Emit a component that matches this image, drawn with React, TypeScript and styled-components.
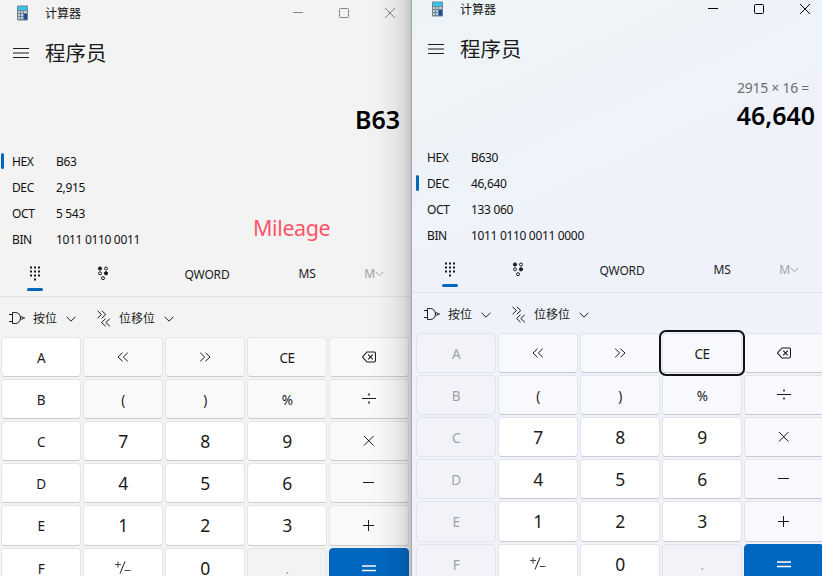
import React from "react";
import styled, { createGlobalStyle, css } from "styled-components";

const GlobalStyle = createGlobalStyle`
  * { box-sizing: border-box; }
  html, body { margin: 0; padding: 0; overflow: hidden; }
  body { font-family: "Noto Sans", "Noto Sans CJK SC", sans-serif; color: #1b1b1b; }
  svg { display: block; flex: none; }
`;

type Theme = { operator: string; disabled: string; line: string; edge: string };
const greyTheme: Theme = { operator: "#f9f9f9", disabled: "#f3f3f3", line: "#e5e5e5", edge: "#cccccc" };
const blueTheme: Theme = { operator: "#f8f9fd", disabled: "#f2f3f9", line: "#e1e4ec", edge: "#c8cad0" };

const Desktop = styled.div`
  display: flex;
  width: 822px;
  height: 576px;
  overflow: hidden;
`;

const Frame = styled.section<{ $active: boolean }>`
  position: relative;
  flex: none;
  width: 411px;
  height: 576px;
  overflow: hidden;
  background: #f3f3f3;
  ${(p) =>
    p.$active &&
    css`
      border-left: 1px solid #a3a8ae;
      background: linear-gradient(155deg, #edf4f7 0%, #eef3f8 20%, #eff2fb 36%, #eff2fa 60%, #f1f2f8 75%);
    `}
`;

const EdgeShadow = styled.div`
  position: absolute;
  inset: 0 0 0 auto;
  width: 48px;
  pointer-events: none;
  background: linear-gradient(
    90deg,
    rgba(0, 0, 0, 0) 0%,
    rgba(0, 0, 0, 0.012) 35%,
    rgba(0, 0, 0, 0.05) 65%,
    rgba(0, 0, 0, 0.11) 86%,
    rgba(0, 0, 0, 0.2) 100%
  );
`;

const Content = styled.div<{ $active: boolean }>`
  display: flex;
  flex-direction: column;
  width: 412px;
  margin: ${(p) => (p.$active ? "-4px 0 0 3px" : "0")};
`;

const TitleBar = styled.header`
  display: flex;
  align-items: center;
  height: 26px;
  padding-left: 16px;
`;

const AppName = styled.span`
  flex: 1;
  margin-left: 16px;
  font: 12px/18px "Noto Sans CJK SC", sans-serif;
  color: #111;
`;

const Controls = styled.div<{ $active: boolean }>`
  display: flex;
  gap: 34px;
  margin-right: 16px;
  color: ${(p) => (p.$active ? "#000" : "#858585")};
`;

const ModeBar = styled.div`
  display: flex;
  align-items: center;
  gap: 16px;
  height: 54px;
  padding-left: 13px;
`;

const ModeName = styled.h1`
  margin: 0;
  padding-bottom: 2px;
  font: 400 20.5px/30px "Noto Sans CJK SC", sans-serif;
`;

const Expression = styled.div`
  height: 24px;
  padding-right: 18px;
  text-align: right;
  font-size: 14px;
  line-height: 24px;
  letter-spacing: -0.27px;
  color: #6c6e73;
`;

const Result = styled.div`
  height: 32px;
  padding-right: 12px;
  text-align: right;
  font-size: 25px;
  font-weight: 600;
  line-height: 30px;
  letter-spacing: -0.05px;
  color: #000;
`;

const RadixList = styled.div`
  display: flex;
  flex-direction: column;
  padding-top: 12px;
`;

const RadixRow = styled.div`
  display: grid;
  grid-template-columns: 3px 41px 1fr;
  column-gap: 4px;
  align-items: center;
  height: 26px;
  padding-left: 1px;
  font-size: 12px;
  line-height: 16px;
  color: #111;
`;

const Marker = styled.i<{ $on: boolean }>`
  height: 16px;
  border-radius: 1.5px;
  background: ${(p) => (p.$on ? "#0067c0" : "transparent")};
`;

const RadixName = styled.span`
  padding: 2px 0 0 4px;
  letter-spacing: -0.4px;
`;

const RadixValue = styled.span`
  padding: 2px 0 0 3px;
  letter-spacing: -0.33px;
`;

const Annotation = styled.div`
  position: absolute;
  left: 253px;
  top: 213px;
  font-size: 21.5px;
  line-height: 29px;
  letter-spacing: -0.4px;
  color: #ff5568;
`;

const Tools = styled.nav<{ $active: boolean }>`
  display: grid;
  grid-template-columns: 68px 68px 140px 60px 74px;
  height: 45px;
  margin: 0 0 0 ${(p) => (p.$active ? "-3px" : "0")};
  padding-left: ${(p) => (p.$active ? "4px" : "1px")};
  border-bottom: 1px solid ${(p) => (p.$active ? "#dfe2e7" : "#e2e2e2")};
`;

const Tool = styled.div<{ $selected?: boolean; $dim?: boolean; $drop?: number }>`
  position: relative;
  display: flex;
  justify-content: center;
  align-items: center;
  padding-top: ${(p) => p.$drop ?? 0}px;
  padding-bottom: 2px;
  font-size: 12px;
  letter-spacing: -0.2px;
  color: ${(p) => (p.$dim ? "#a1a1a3" : "#1b1b1b")};
  ${(p) =>
    p.$selected &&
    css`
      &::after {
        content: "";
        position: absolute;
        left: 26px;
        bottom: 5px;
        width: 16px;
        height: 3px;
        border-radius: 1.5px;
        background: #0067c0;
      }
    `}
`;

const BitBar = styled.div`
  display: flex;
  align-items: center;
  height: 40px;
  padding: 2px 0 0 9px;
  font: 12px/18px "Noto Sans CJK SC", sans-serif;
`;

const BitMenu = styled.div<{ $width: number }>`
  display: flex;
  align-items: center;
  gap: 8px;
  width: ${(p) => p.$width}px;
  > svg:last-child { margin: 2px 0 0 1px; }
`;

const Pad = styled.div`
  display: grid;
  grid-template-columns: repeat(5, 80px);
  grid-template-rows: repeat(4, 40px) 41px 41px;
  gap: 2px;
  padding-left: 1px;
`;

type Kind = "digit" | "operator" | "disabled" | "accent";
const Key = styled.button<{ $kind: Kind; $theme: Theme; $big: boolean; $focus: boolean }>`
  display: flex;
  justify-content: center;
  align-items: center;
  padding: ${(p) => (p.$big ? "0" : "1px 0 0")};
  border: 1px solid ${(p) => p.$theme.line};
  border-bottom-color: ${(p) => (p.$kind === "disabled" ? p.$theme.line : p.$theme.edge)};
  border-radius: 4px;
  background: ${(p) => (p.$kind === "digit" ? "#fff" : p.$theme[p.$kind === "disabled" ? "disabled" : "operator"])};
  color: ${(p) => (p.$kind === "disabled" ? "#a0a1a5" : "#1b1b1b")};
  font: ${(p) => (p.$big ? "17.5px/19px" : "13.5px/18px")} "Noto Sans", sans-serif;
  letter-spacing: -0.5px;
  ${(p) =>
    p.$kind === "accent" &&
    css`
      border-color: #0067c0;
      background: #0067c0;
      color: #fff;
    `}
  ${(p) =>
    p.$focus &&
    css`
      outline: 2px solid #111216;
      outline-offset: 1px;
      z-index: 1;
    `}
  svg { margin-top: -2px; }
`;

const stroke = { fill: "none", stroke: "currentColor", strokeWidth: 1 } as const;

const CalcLogo = () => (
  <svg width="13" height="16" viewBox="0 0 13 16">
    <rect x="1" y="0.5" width="11" height="15" rx="1" fill="#718290" />
    <rect x="2" y="1.5" width="9" height="3.5" fill="#35c5ef" />
    <path d="M2 6h2v2h-2zM5 6h2v2h-2zM8 6h3v2h-3zM2 9h2v2h-2zM5 9h2v2h-2zM2 12h2v2h-2zM5 12h2v2h-2z" fill="#c3cdd4" />
    <rect x="8" y="9" width="3" height="5.5" fill="#114f9d" />
  </svg>
);
const Minimize = () => (
  <svg width="12" height="12" viewBox="0 0 12 12"><path d="M1 5.5H11" {...stroke} /></svg>
);
const Maximize = () => (
  <svg width="12" height="12" viewBox="0 0 12 12"><rect x="1.5" y="1.5" width="9" height="9" rx="1" {...stroke} /></svg>
);
const Close = () => (
  <svg width="12" height="12" viewBox="0 0 12 12"><path d="M1 1L11 11M11 1L1 11" {...stroke} /></svg>
);
const Burger = () => (
  <svg width="16" height="12" viewBox="0 0 16 12">
    <path d="M0 1.5H16M0 6H16M0 10.5H16" {...stroke} />
  </svg>
);
const Keypad = () => (
  <svg width="12" height="15" viewBox="0 0 12 15" fill="currentColor">
    {[0, 4, 8].flatMap((y) => [1, 5, 9].map((x) => <rect key={`${x}-${y}`} x={x} y={y + 0.5} width="2" height="2" />))}
    <rect x="5" y="12.5" width="2" height="2" />
  </svg>
);
const BitPad = () => (
  <svg width="12" height="15" viewBox="0 0 12 15" fill="none" stroke="currentColor">
    <circle cx="3" cy="2.5" r="1.6" fill="currentColor" />
    <circle cx="9" cy="2.5" r="1.5" />
    <circle cx="3" cy="7.3" r="1.5" />
    <circle cx="9" cy="7.3" r="1.6" fill="currentColor" />
    <circle cx="6" cy="12.2" r="1.5" />
  </svg>
);
const Chevron = ({ w = 10 }: { w?: number }) => (
  <svg width={w} height={w * 0.6} viewBox="0 0 10 6"><path d="M0.5 0.7L5 5.2L9.5 0.7" {...stroke} strokeWidth={10 / w} /></svg>
);
const Gate = () => (
  <svg width="16" height="12" viewBox="0 0 16 12">
    <path d="M3.5 0.5H6.5C9.5 0.5 11.5 3 11.5 6S9.5 11.5 6.5 11.5H3.5ZM0 2.5H3.5M0 9.5H3.5M14 6H16" {...stroke} />
    <circle cx="12.7" cy="6" r="1.3" {...stroke} />
  </svg>
);
const Shift = () => (
  <svg width="14" height="17" viewBox="0 0 14 17">
    <path d="M0.5 0.8L4.5 4.5L0.5 8.2M4.8 0.8L8.8 4.5L4.8 8.2M8.5 8.8L4.5 12.5L8.5 16.2M12.8 8.8L8.8 12.5L12.8 16.2" {...stroke} />
  </svg>
);
const Left = () => (
  <svg width="12" height="10" viewBox="0 0 12 10"><path d="M5.5 0.7L1 5L5.5 9.3M10.8 0.7L6.3 5L10.8 9.3" {...stroke} /></svg>
);
const Right = () => (
  <svg width="12" height="10" viewBox="0 0 12 10"><path d="M1.2 0.7L5.7 5L1.2 9.3M6.5 0.7L11 5L6.5 9.3" {...stroke} /></svg>
);
const Backspace = () => (
  <svg width="14" height="12" viewBox="0 0 14 12">
    <path d="M5 1H12Q13.5 1 13.5 2.5V9.5Q13.5 11 12 11H5L1 6.7Q0.4 6 1 5.3ZM6.2 3.7L10.8 8.3M10.8 3.7L6.2 8.3" {...stroke} strokeWidth={1.1} />
  </svg>
);
const Divide = () => (
  <svg width="14" height="12" viewBox="0 0 14 12">
    <path d="M0 5.5H14" {...stroke} />
    <path d="M6 0.5h2v2h-2zM6 8.5h2v2h-2z" fill="currentColor" opacity="0.75" />
  </svg>
);
const Times = () => (
  <svg width="12" height="12" viewBox="0 0 12 12"><path d="M1 1L10.5 10.5M10.5 1L1 10.5" {...stroke} /></svg>
);
const Minus = () => (
  <svg width="12" height="12" viewBox="0 0 12 12"><path d="M0 5.5H11" {...stroke} /></svg>
);
const Plus = () => (
  <svg width="12" height="12" viewBox="0 0 12 12"><path d="M0 6.5H11M5.5 1V12" {...stroke} /></svg>
);
const Equals = () => (
  <svg width="14" height="8" viewBox="0 0 14 8"><path d="M0 2H14M0 6.5H14" {...stroke} strokeWidth={1.3} /></svg>
);
const Sign = () => (
  <svg width="18" height="14" viewBox="0 0 18 14">
    <path d="M1 3.5H7M4 0.5V6.5M10.5 9.5H16.5" {...stroke} strokeWidth={1.1} opacity="0.8" />
    <path d="M11 0.5L6 12.5" {...stroke} />
  </svg>
);

const glyphs: Record<string, () => React.JSX.Element> = {
  lsh: Left, rsh: Right, back: Backspace, div: Divide, mul: Times, sub: Minus, add: Plus, eq: Equals, sign: Sign,
};
const keys = [
  "A", "lsh", "rsh", "CE", "back",
  "B", "(", ")", "%", "div",
  "C", "7", "8", "9", "mul",
  "D", "4", "5", "6", "sub",
  "E", "1", "2", "3", "add",
  "F", "sign", "0", ".", "eq",
];

type CalcProps = { active?: boolean; expression?: string; result: string; radix: string; values: [string, string][] };

function Calculator({ active = false, expression, result, radix, values }: CalcProps) {
  const theme = active ? blueTheme : greyTheme;
  const kindOf = (k: string): Kind => {
    if (k === "eq") return "accent";
    if (k === "." || (active && /^[A-F]$/.test(k))) return "disabled";
    return /^([A-F]|\d|sign)$/.test(k) ? "digit" : "operator";
  };
  return (
    <Frame $active={active}>
      <Content $active={active}>
        <TitleBar>
          <CalcLogo />
          <AppName>计算器</AppName>
          <Controls $active={active}><Minimize /><Maximize /><Close /></Controls>
        </TitleBar>
        <ModeBar><Burger /><ModeName>程序员</ModeName></ModeBar>
        <Expression>{expression}</Expression>
        <Result>{result}</Result>
        <RadixList>
          {values.map(([name, value]) => (
            <RadixRow key={name}>
              <Marker $on={name === radix} />
              <RadixName>{name}</RadixName>
              <RadixValue>{value}</RadixValue>
            </RadixRow>
          ))}
        </RadixList>
        <Tools $active={active}>
          <Tool $selected><Keypad /></Tool>
          <Tool><BitPad /></Tool>
          <Tool $drop={3}>QWORD</Tool>
          <Tool $drop={1}>MS</Tool>
          <Tool $drop={1} $dim>M<Chevron w={9} /></Tool>
        </Tools>
        <BitBar>
          <BitMenu $width={88}><Gate />按位<Chevron /></BitMenu>
          <BitMenu $width={90}><Shift />位移位<Chevron /></BitMenu>
        </BitBar>
        <Pad>
          {keys.map((k) => {
            const Glyph = glyphs[k];
            return (
              <Key key={k} $kind={kindOf(k)} $theme={theme} $big={/^\d$/.test(k)} $focus={active && k === "CE"}>
                {Glyph ? <Glyph /> : k}
              </Key>
            );
          })}
        </Pad>
      </Content>
      {!active && <Annotation>Mileage</Annotation>}
      {!active && <EdgeShadow />}
    </Frame>
  );
}

export default function App() {
  return (
    <>
      <GlobalStyle />
      <Desktop>
        <Calculator
          result="B63"
          radix="HEX"
          values={[["HEX", "B63"], ["DEC", "2,915"], ["OCT", "5 543"], ["BIN", "1011 0110 0011"]]}
        />
        <Calculator
          active
          expression="2915 × 16 ="
          result="46,640"
          radix="DEC"
          values={[["HEX", "B630"], ["DEC", "46,640"], ["OCT", "133 060"], ["BIN", "1011 0110 0011 0000"]]}
        />
      </Desktop>
    </>
  );
}
